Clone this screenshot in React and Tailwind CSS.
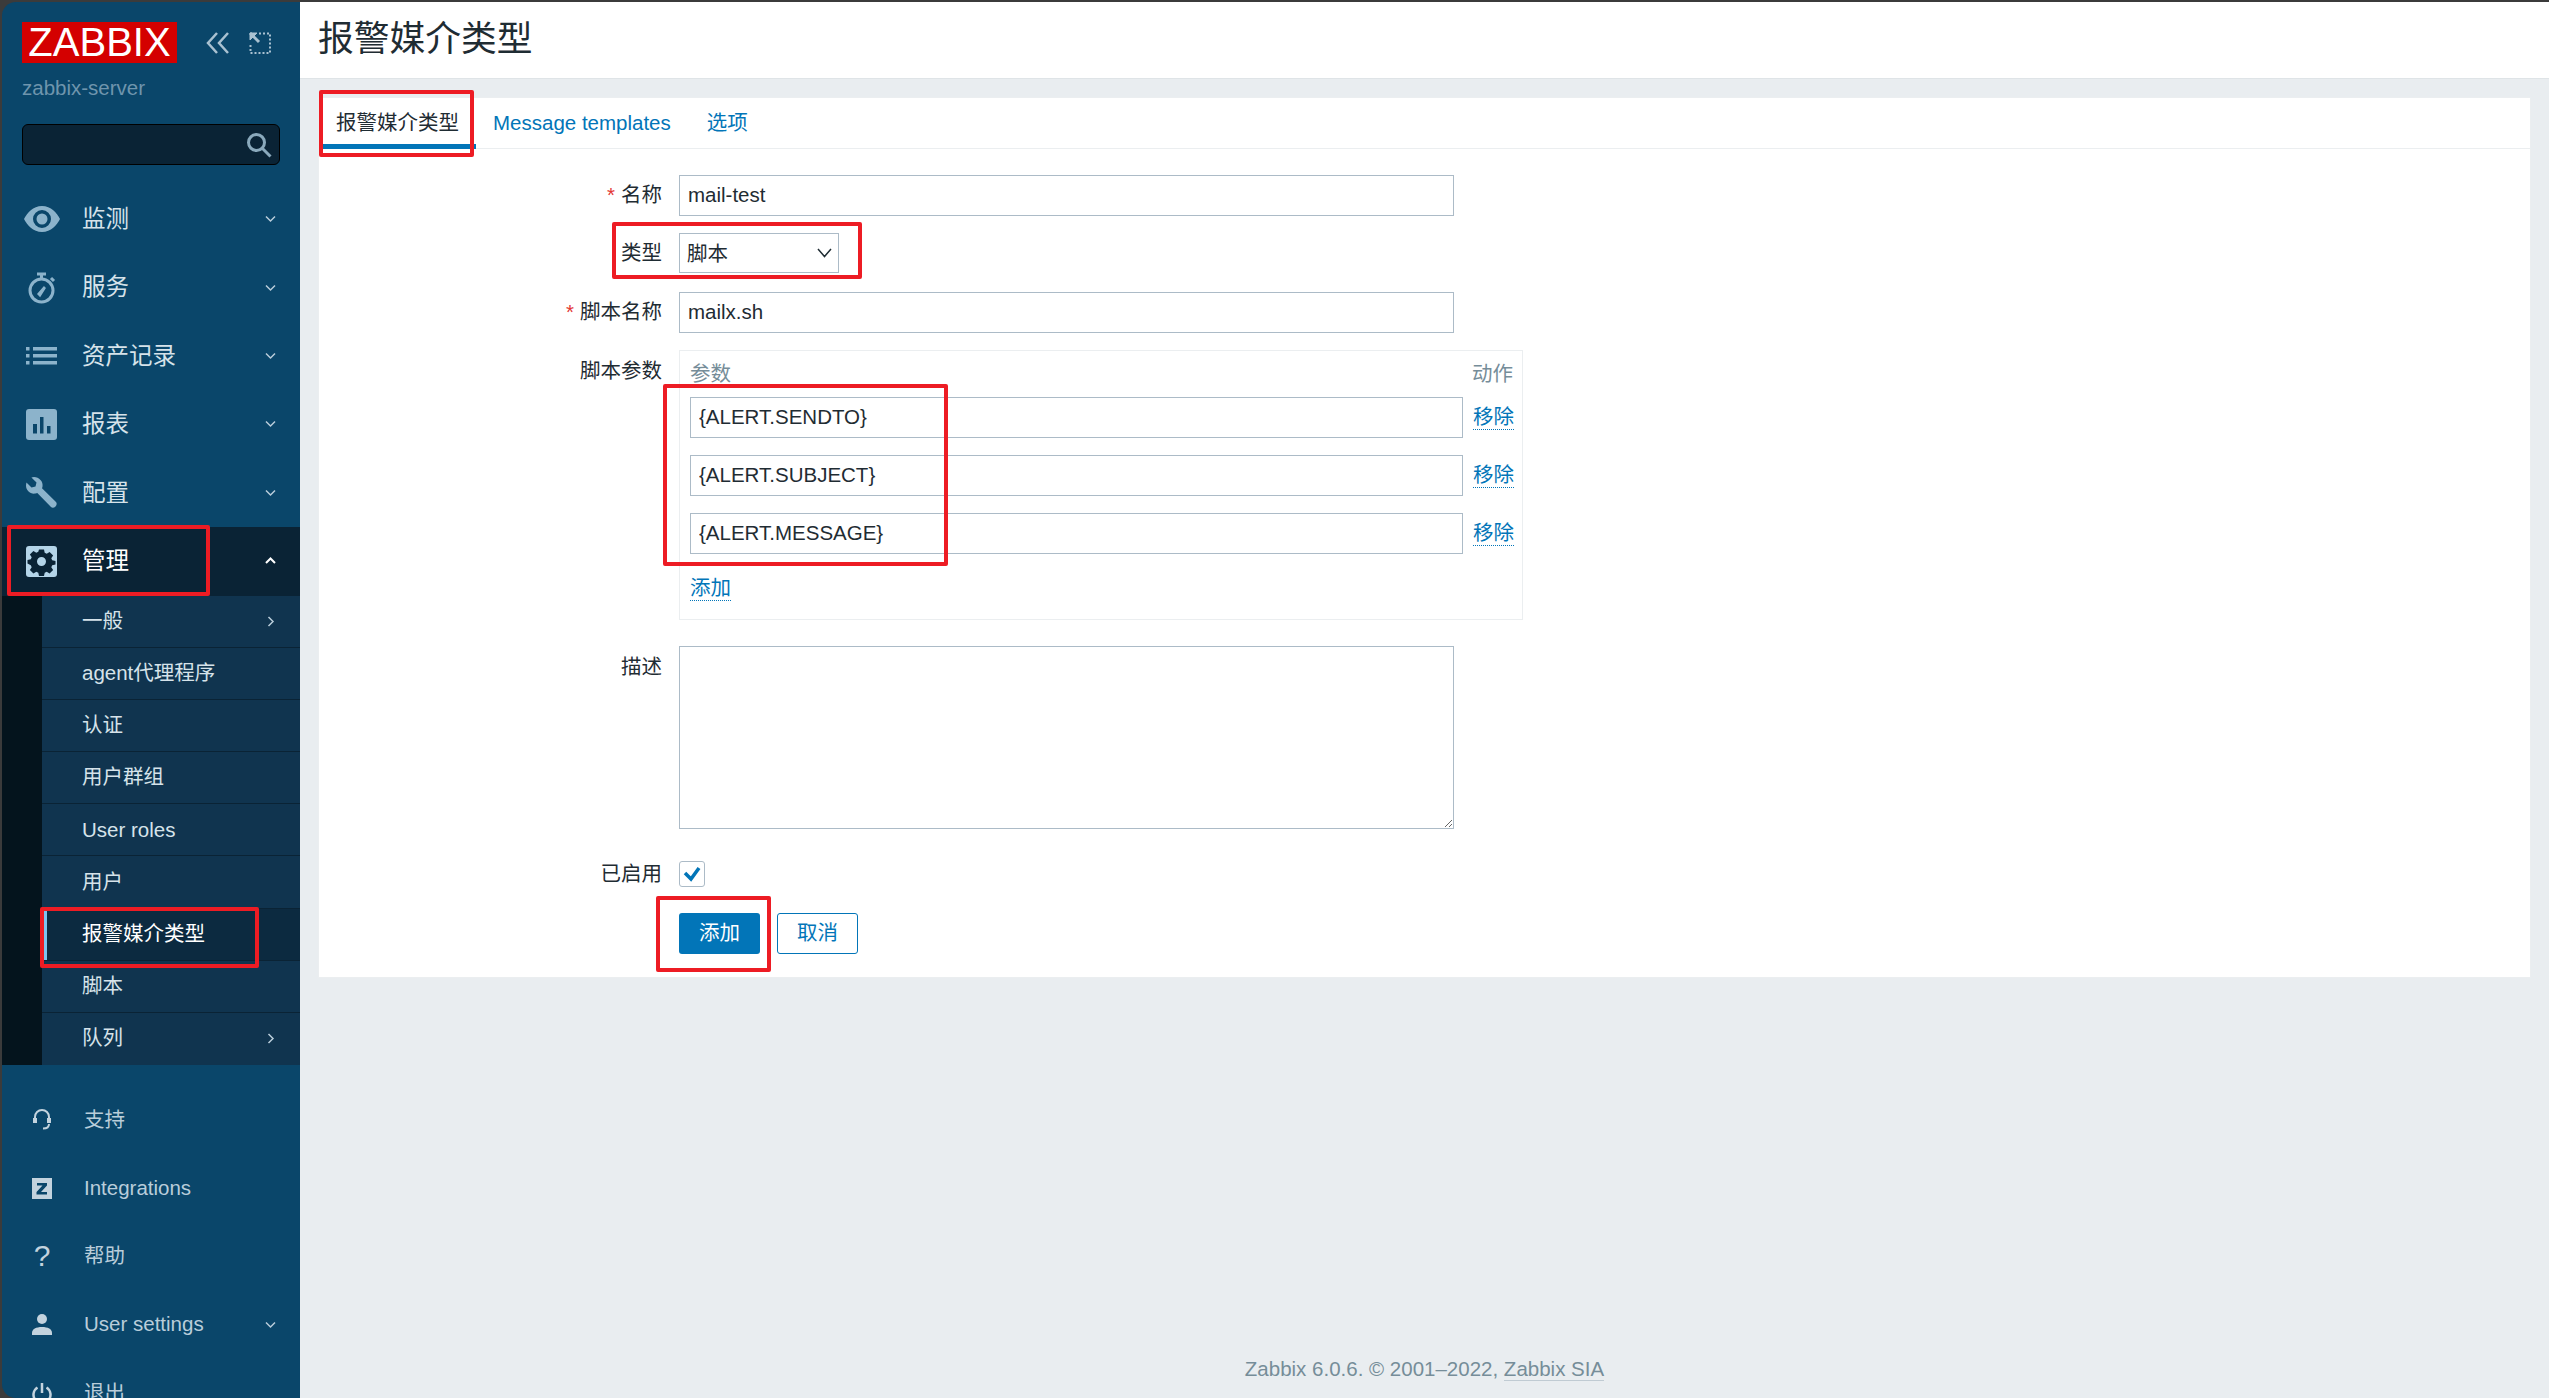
const FONT = "font-['Liberation_Sans','Noto_Sans_CJK_SC',sans-serif]";

function Eye() {
  return (
    <svg width="38" height="28" viewBox="0 0 38 28" fill="#8cb3cb">
      <path fillRule="evenodd" d="M19 1C10 1 4 8 1 14c3 6 9 13 18 13s15-7 18-13C34 8 28 1 19 1Zm0 4a9 9 0 1 1 0 18 9 9 0 0 1 0-18Z" />
      <circle cx="19" cy="14" r="5.5" />
    </svg>
  );
}

function Stopwatch() {
  return (
    <svg width="28" height="32" viewBox="0 0 28 32" fill="none" stroke="#8cb3cb" strokeWidth="3">
      <circle cx="13.5" cy="18.5" r="11.5" />
      <path d="M9 2h9M13.5 2v5M23 6l3 3" />
      <path d="M10 22l6-7 1 1-5 8z" fill="#8cb3cb" strokeWidth="1.5" />
    </svg>
  );
}

function ListIcon() {
  return (
    <svg width="31" height="18" viewBox="0 0 31 18" fill="#8cb3cb">
      <rect x="0" y="0" width="3.5" height="3.5" />
      <rect x="0" y="7" width="3.5" height="3.5" />
      <rect x="0" y="14" width="3.5" height="3.5" />
      <rect x="7" y="0" width="24" height="3.5" />
      <rect x="7" y="7" width="24" height="3.5" />
      <rect x="7" y="14" width="24" height="3.5" />
    </svg>
  );
}

function ReportIcon() {
  return (
    <svg width="31" height="31" viewBox="0 0 31 31">
      <rect width="31" height="31" rx="3" fill="#8cb3cb" />
      <rect x="7" y="15" width="4" height="9.5" fill="#0a466a" />
      <rect x="14" y="8" width="3.5" height="16.5" fill="#0a466a" />
      <rect x="21" y="17" width="3.5" height="7.5" fill="#0a466a" />
    </svg>
  );
}

function Wrench() {
  return (
    <svg width="31" height="31" viewBox="0 0 31 31" fill="#8cb3cb">
      <path d="M8 0c-1 0-2 .2-2.6.5L10.500 5.500 9.500 9.500 5.500 10.500.5 5.500C.2 6.500 0 7.500 0 8.500c0 5 4.500 9 9.500 8 .7-.1 1.300-.3 1.800-.5L25 30c1 1 3 1 4.500-.5S31 26 30 25L16 11.300c.2-.6.400-1.200.5-1.800C17.500 4.500 13 0 8 0Z" />
    </svg>
  );
}

function GearIcon() {
  return (
    <svg width="31" height="31" viewBox="0 0 31 31">
      <rect width="31" height="31" rx="3" fill="#b4d4e8" />
      <path
        fill="#0a2335"
        fillRule="evenodd"
        d="M13 4h5l.7 3.300 2 .9 2.900-1.800 3.500 3.500-1.800 2.900.9 2 3.300.7v3.500l-3.300.7-.9 2 1.800 2.900-3.500 3.500-2.900-1.800-2 .9-.7 3.300h-5l-.7-3.300-2-.9-2.900 1.800-3.500-3.500 1.800-2.900-.9-2L1.500 18v-3.500l3.300-.7.9-2-1.800-2.900 3.500-3.500 2.900 1.800 2-.9ZM15.500 11.500a4.500 4.500 0 1 0 0 9 4.500 4.500 0 0 0 0-9Z"
        transform="translate(0 -.5)"
      />
    </svg>
  );
}

function Headset() {
  return (
    <svg width="20" height="22" viewBox="0 0 20 22" fill="none" stroke="#c3d3de" strokeWidth="2">
      <path d="M3 11V8a7 7 0 0 1 14 0v3" />
      <path d="M3 9v5M17 9v5" strokeWidth="4" />
      <path d="M17 15c0 3-2 4.500-6 4.500" strokeWidth="2" />
    </svg>
  );
}

function ZIcon() {
  return (
    <svg width="20" height="21" viewBox="0 0 20 21">
      <rect width="20" height="21" fill="#c3d3de" />
      <path d="M5 5h10v2.500L9 14h6v2.500H4.500V14l6-6.500H5z" fill="#0a466a" />
    </svg>
  );
}

function UserIcon() {
  return (
    <svg width="20" height="21" viewBox="0 0 20 21" fill="#c3d3de">
      <circle cx="10" cy="5" r="5" />
      <path d="M0 21v-2c0-4 4-6 10-6s10 2 10 6v2z" />
    </svg>
  );
}

function PowerIcon() {
  return (
    <svg width="20" height="22" viewBox="0 0 20 22" fill="none" stroke="#c3d3de" strokeWidth="2.500">
      <path d="M10 1v10" />
      <path d="M5.500 5.500a8.500 8.500 0 1 0 9 0" />
    </svg>
  );
}

function Chevron({ dir = 'down', color = '#b9cdda' }) {
  const paths = {
    down: 'M1 1.500l4.500 4.500L10 1.500',
    up: 'M1 6l4.500-4.500L10 6',
  };
  if (dir === 'right') {
    return (
      <svg width="8" height="11" viewBox="0 0 8 11" fill="none" stroke={color} strokeWidth="1.500">
        <path d="M1.500 1l4.500 4.500L1.500 10" />
      </svg>
    );
  }
  return (
    <svg width="11" height="8" viewBox="0 0 11 8" fill="none" stroke={color} strokeWidth={dir === 'up' ? 2 : 1.500}>
      <path d={paths[dir]} />
    </svg>
  );
}

function RedBox({ className }) {
  return <div className={`absolute border-[4px] border-[#ed1c24] rounded-[2px] pointer-events-none ${className}`} />;
}

const mainNav = [
  { label: '监测', icon: <Eye /> },
  { label: '服务', icon: <Stopwatch /> },
  { label: '资产记录', icon: <ListIcon /> },
  { label: '报表', icon: <ReportIcon /> },
  { label: '配置', icon: <Wrench /> },
];

const subNav = [
  { label: '一般', arrow: true },
  { label: 'agent代理程序' },
  { label: '认证' },
  { label: '用户群组' },
  { label: 'User roles' },
  { label: '用户' },
  { label: '报警媒介类型', active: true },
  { label: '脚本' },
  { label: '队列', arrow: true },
];

const bottomNav = [
  { label: '支持', icon: <Headset /> },
  { label: 'Integrations', icon: <ZIcon /> },
  { label: '帮助', icon: <span className="text-[30px] leading-none text-[#c3d3de]">?</span> },
  { label: 'User settings', icon: <UserIcon />, chevron: true },
  { label: '退出', icon: <PowerIcon /> },
];

function Sidebar() {
  return (
    <aside className="relative w-[298px] shrink-0 h-full bg-[#0a466a] rounded-l-[14px] overflow-hidden flex flex-col">
      <div className="flex items-center pl-[20px] pt-[20px]">
        <div className="w-[155px] h-[41px] bg-[#d40000] text-white text-[40px] leading-[41px] text-center">ZABBIX</div>
        <svg className="ml-[29px]" width="24" height="22" viewBox="0 0 24 22" fill="none" stroke="#a9c1d1" strokeWidth="2.500">
          <path d="M11 1L2 11l9 10M22 1l-9 10 9 10" />
        </svg>
        <svg className="ml-[19px]" width="22" height="22" viewBox="0 0 22 22" fill="none" stroke="#a9c1d1" strokeWidth="2">
          <path d="M10 1.500h11v19.500H1.500V11" strokeDasharray="2 2" />
          <path d="M1 1l9 9" strokeWidth="3" />
          <path d="M1 1h7l-7 7z" fill="#a9c1d1" strokeWidth="1" />
        </svg>
      </div>
      <div className="pl-[20px] mt-[13px] text-[20.5px] leading-[24px] text-[#6f95ad]">zabbix-server</div>
      <div className="ml-[20px] mt-[24px] w-[258px] h-[41px] shrink-0 bg-[#0a2335] border border-black rounded-[6px] flex items-center justify-end pr-[7px]">
        <svg width="26" height="26" viewBox="0 0 26 26" fill="none" stroke="#8aa9bc" strokeWidth="3">
          <circle cx="10.500" cy="10.500" r="8" />
          <path d="M16.500 16.500l8 8" />
        </svg>
      </div>

      <nav className="mt-[20px] shrink-0">
        {mainNav.map((item) => (
          <div key={item.label} className="h-[68.4px] flex items-center text-[23.5px] text-[#d6e3ea]">
            <div className="w-[80px] flex justify-center pr-[1px] shrink-0">{item.icon}</div>
            <span className="flex-1 pt-[1px]">{item.label}</span>
            <span className="pr-[24px] flex"><Chevron /></span>
          </div>
        ))}
        <div className="h-[69px] bg-[#0a2335] flex items-center text-[23.5px] text-white">
          <div className="w-[80px] flex justify-center pr-[1px] shrink-0"><GearIcon /></div>
          <span className="flex-1 pt-[1px]">管理</span>
          <span className="pr-[24px] flex"><Chevron dir="up" color="#ffffff" /></span>
        </div>
        <div className="bg-[#04141d] pl-[40px]">
          {subNav.map((item, i) => (
            <div
              key={item.label}
              className={`h-[52.1px] flex items-center pl-[40px] text-[20.5px] border-[#0a2335] relative ${
                item.active ? 'bg-[#0c2a40] text-white' : 'bg-[#10344f] text-[#d6e3ea]'
              } ${i < subNav.length - 1 ? 'border-b' : ''}`}
            >
              {item.active && <div className="absolute left-[1px] top-0 bottom-0 w-[4px] bg-[#7cc3f0]" />}
              <span className="flex-1">{item.label}</span>
              {item.arrow && <span className="pr-[25px] flex"><Chevron dir="right" /></span>}
            </div>
          ))}
        </div>
      </nav>

      <div className="mt-[20px] pt-[1px] shrink-0">
        {bottomNav.map((item) => (
          <div key={item.label} className="h-[68.25px] flex items-center text-[20.5px] text-[#b9cdda]">
            <div className="w-[82px] flex justify-center pr-[2px] shrink-0">{item.icon}</div>
            <span className="flex-1">{item.label}</span>
            {item.chevron && <span className="pr-[24px] flex"><Chevron /></span>}
          </div>
        ))}
      </div>

      <RedBox className="left-[5px] top-[523px] w-[203px] h-[71px]" />
      <RedBox className="left-[38px] top-[905px] w-[219px] h-[61px]" />
    </aside>
  );
}

function TextInput({ value, className = 'w-[775px]' }) {
  return (
    <input
      readOnly
      value={value}
      className={`h-[41px] shrink-0 border border-[#acbbc7] bg-white px-[8px] pb-[1px] text-[20.5px] text-[#1f2c33] outline-none ${className}`}
    />
  );
}

function Row({ label, required, className = '', children, labelClass = 'items-center h-[41px]' }) {
  return (
    <div className={`flex ${className}`}>
      <div className={`w-[343px] flex justify-end text-[20.5px] text-[#1f2c33] shrink-0 ${labelClass}`}>
        {required && <span className="text-[#e33734] mr-[6px]">*</span>}
        {label}
      </div>
      <div className="ml-[17px]">{children}</div>
    </div>
  );
}

const params = ['{ALERT.SENDTO}', '{ALERT.SUBJECT}', '{ALERT.MESSAGE}'];

function DottedLink({ children }) {
  return (
    <span className="whitespace-nowrap text-[20.5px] leading-[24px] text-[#0275b8] border-b border-dotted border-[#0275b8] pb-[1px]">{children}</span>
  );
}

function Form() {
  return (
    <div className="relative mt-[18px] mx-[18px] bg-white border border-[#ebeef0] h-[881px]">
      <div className="h-[51px] border-b border-[#ebeef0] flex text-[20.5px]">
        <div className="px-[17px] flex items-center text-[#1f2c33] border-b-[5px] border-[#0275b8] h-[51px] pt-[5px]">报警媒介类型</div>
        <div className="pl-[17px] pr-[18px] flex items-center text-[#0275b8]">Message templates</div>
        <div className="px-[18px] flex items-center text-[#0275b8]">选项</div>
      </div>

      <Row label="名称" required className="mt-[26px]"><TextInput value="mail-test" /></Row>
      <Row label="类型" className="mt-[17px]">
        <div className="relative w-[160px] h-[40px] border border-[#acbbc7] flex items-center pl-[7px] pt-[2px] text-[20.5px] text-[#1f2c33]">
          脚本
          <svg className="absolute right-[6px] top-[14px]" width="15" height="10" viewBox="0 0 15 10" fill="none" stroke="#1f2c33" strokeWidth="1.500">
            <path d="M1 1l6.500 7.500L14 1" />
          </svg>
        </div>
      </Row>
      <Row label="脚本名称" required className="mt-[18px]"><TextInput value="mailx.sh" /></Row>

      <Row label="脚本参数" className="mt-[17px]" labelClass="pt-[6px]">
        <div className="w-[844px] h-[270px] border border-[#ebeef0] px-[10px] pt-[10px]">
          <div className="flex justify-between text-[20.5px] leading-[26px] text-[#768d99] h-[36px] -mr-[1px]">
            <span>参数</span>
            <span>动作</span>
          </div>
          {params.map((p) => (
            <div key={p} className="flex items-center mb-[17px]">
              <TextInput value={p} className="w-[773px]" />
              <span className="ml-[10px] shrink-0"><DottedLink>移除</DottedLink></span>
            </div>
          ))}
          <div className="mt-[22px]"><DottedLink>添加</DottedLink></div>
        </div>
      </Row>

      <Row label="描述" className="mt-[26px]" labelClass="pt-[6px]">
        <textarea readOnly className="block w-[775px] h-[183px] border border-[#acbbc7] resize outline-none" />
      </Row>

      <Row label="已启用" className="mt-[32px]" labelClass="items-center h-[26px]">
        <div className="w-[26px] h-[26px] border border-[#acbbc7] rounded-[3px] flex items-center justify-center">
          <svg width="18" height="16" viewBox="0 0 18 16" fill="none" stroke="#0275b8" strokeWidth="3.500">
            <path d="M2 7l6 6 8-11" />
          </svg>
        </div>
      </Row>

      <div className="flex ml-[360px] mt-[26px] gap-[17px] text-[20.5px]">
        <div className="w-[81px] h-[41px] bg-[#0275b8] rounded-[3px] text-white flex items-center justify-center">添加</div>
        <div className="w-[81px] h-[41px] border border-[#0275b8] rounded-[3px] text-[#0275b8] flex items-center justify-center">取消</div>
      </div>

      <RedBox className="left-[0px] top-[-8px] w-[155px] h-[67px]" />
      <RedBox className="left-[293px] top-[124px] w-[250px] h-[57px]" />
      <RedBox className="left-[344px] top-[286px] w-[285px] h-[182px]" />
      <RedBox className="left-[337px] top-[798px] w-[115px] h-[76px]" />
    </div>
  );
}

export default function App() {
  return (
    <div className={`${FONT} w-full h-[1398px] overflow-hidden bg-[#3b3b3b] pt-[2px] pl-[2px] flex`}>
      <Sidebar />
      <main className="flex-1 h-full bg-[#e9edf0] flex flex-col">
        <header className="h-[77px] shrink-0 bg-white border-b border-[#dfe4e7] flex items-center pl-[18px] text-[35.75px] text-[#1f2c33]">
          报警媒介类型
        </header>
        <Form />
        <footer className="mt-auto pb-[17px] text-center text-[20.5px] leading-[24px] text-[#768d99]">
          Zabbix 6.0.6. © 2001–2022, <span className="border-b border-[#c0cbd3]">Zabbix SIA</span>
        </footer>
      </main>
    </div>
  );
}
